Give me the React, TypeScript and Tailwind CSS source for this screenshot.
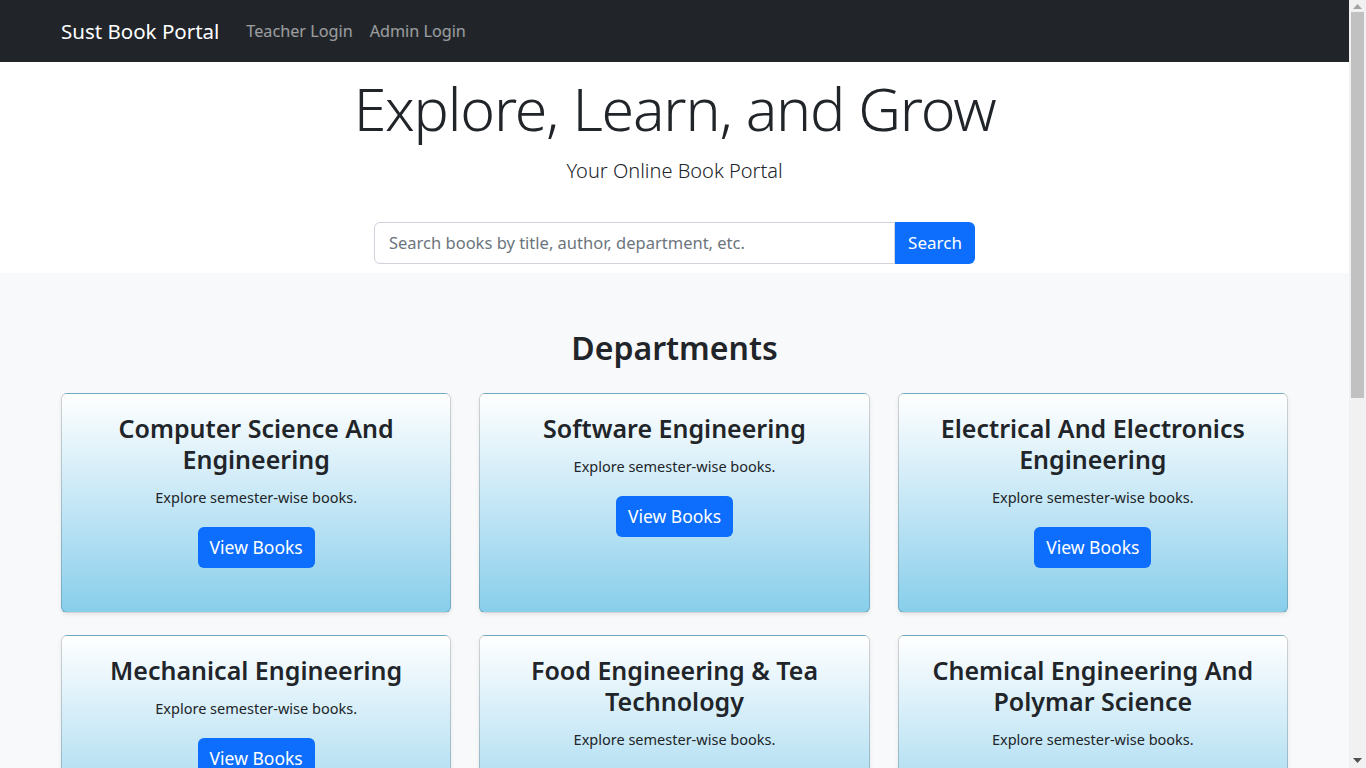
const departments = [
  "Computer Science And Engineering",
  "Software Engineering",
  "Electrical And Electronics Engineering",
  "Mechanical Engineering",
  "Food Engineering & Tea Technology",
  "Chemical Engineering And Polymar Science",
  "Civil And Environmental Engineering",
  "Industrial And Production Engineering",
  "Petroleum And Mining Engineering",
];

const DepartmentCard = ({ name }: { name: string }) => (
  <div className="h-[220px] rounded-[6px] border border-black/[.175] bg-linear-to-b from-white to-[#87ceeb] shadow-[0_2px_4px_rgba(0,0,0,0.075)] px-5 pt-[19px] text-center">
    <h3 className="text-[25px] font-semibold leading-[31px] text-[#212529]">
      {name}
    </h3>
    <p className="mt-[10px] text-[14.5px] leading-6 text-[#212529]">
      Explore semester-wise books.
    </p>
    <button className="mt-[18px] rounded-[6px] bg-[#0d6efd] px-[12px] py-[7px] text-[17.5px] leading-[27px] text-white">
      View Books
    </button>
  </div>
);

// fake classic scrollbar, the page in the screenshot is scrolled to the top
const Scrollbar = () => (
  <div className="flex w-[17px] shrink-0 flex-col items-center bg-[#f1f1f1]">
    <div className="flex h-[12px] items-center justify-center">
      <svg width="9" height="5" viewBox="0 0 9 5">
        <path d="M4.5 0 L9 5 L0 5 Z" fill="#a3a3a3" />
      </svg>
    </div>
    <div className="h-[386px] w-[13px] bg-[#c1c1c1]" />
    <div className="flex-1" />
    <div className="flex h-[16px] items-center justify-center">
      <svg width="9" height="5" viewBox="0 0 9 5">
        <path d="M0 0 L9 0 L4.5 5 Z" fill="#505050" />
      </svg>
    </div>
  </div>
);

export default function App() {
  return (
    <div className="flex h-screen overflow-hidden font-['Segoe_UI','Noto_Sans',sans-serif] text-[#212529]">
      <main className="min-w-0 flex-1 overflow-hidden bg-[#f8f9fa]">
        <nav className="flex h-[62px] items-center bg-[#212529] px-[61px]">
          <span className="mr-[27px] text-[20.5px] text-white">Sust Book Portal</span>
          <div className="flex items-center gap-[17px] text-[16.2px] text-white/55">
            <a>Teacher Login</a>
            <a>Admin Login</a>
          </div>
        </nav>

        <header className="bg-white pt-[9px] pb-[9px] text-center">
          <h1 className="text-[59px] font-light leading-[75px] tracking-[-1.2px]">
            Explore, Learn, and Grow
          </h1>
          <p className="mt-[10px] text-[20px] font-light leading-[30px]">
            Your Online Book Portal
          </p>
          <div className="mx-auto mt-[36px] flex h-[42px] w-[601px]">
            <input
              className="min-w-0 flex-1 rounded-l-[6px] border border-[#ced4da] px-[14px] text-[16.5px] outline-none placeholder:text-[#6c757d]"
              placeholder="Search books by title, author, department, etc."
            />
            <button className="w-[80px] rounded-r-[6px] bg-[#0d6efd] text-[17px] text-white">
              Search
            </button>
          </div>
        </header>

        <section className="px-[61px] pt-[56px] pb-12">
          <h2 className="text-center text-[32px] font-semibold leading-[1.2]">
            Departments
          </h2>
          <div className="mt-[26px] grid grid-cols-3 gap-x-[28px] gap-y-[22px]">
            {departments.map((d) => (
              <DepartmentCard key={d} name={d} />
            ))}
          </div>
        </section>
      </main>
      <Scrollbar />
    </div>
  );
}
